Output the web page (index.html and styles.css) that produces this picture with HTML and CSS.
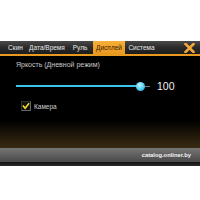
FILE: index.html
```html
<!DOCTYPE html>
<html>
<head>
<meta charset="utf-8">
<link rel="stylesheet" href="styles.css">
</head>
<body>
<div class="screen">
  <div class="tabbar">
    <div class="tab t1">Скин</div>
    <div class="tab t2">Дата/Время</div>
    <div class="tab t3">Руль</div>
    <div class="tab t4 active">Дисплей</div>
    <div class="tab t5">Система</div>
    <svg class="close" width="11" height="10" viewBox="0 0 11 10">
      <path d="M1.5 1 L9.5 9 M9.5 1 L1.5 9" stroke="#f4a838" stroke-width="2.6" stroke-linecap="square"/>
    </svg>
  </div>
  <div class="accent"></div>
  <div class="content">
    <div class="label">Яркость (Дневной режим)</div>
    <div class="slider-row">
      <div class="track">
        <div class="fill"></div>
        <div class="knob"></div>
        <div class="rest"></div>
      </div>
      <div class="value">100</div>
    </div>
    <div class="check-row">
      <div class="checkbox">
        <svg width="9" height="8" viewBox="0 0 9 8"><path d="M1 3.5 L3.5 6.5 L8 1" fill="none" stroke="#f0e020" stroke-width="1.8"/></svg>
      </div>
      <div class="check-label">Камера</div>
    </div>
  </div>
  <div class="footer"><span class="site">catalog.onliner.by</span></div>
  <div class="bottom"></div>
</div>
</body>
</html>
```
FILE: styles.css
```css
html, body {
  margin: 0;
  padding: 0;
  background: #ffffff;
  font-family: "Liberation Sans", Arial, sans-serif;
}
.screen {
  margin-top: 41px;
  width: 200px;
  display: flex;
  flex-direction: column;
  background: #000;
}
.tabbar {
  height: 13px;
  display: flex;
  align-items: stretch;
  padding-left: 4px;
  background: linear-gradient(#4a4a4a, #2a2a2a 50%, #1c1c1c);
}
.tab {
  color: #e8e8e8;
  font-size: 6.5px;
  display: flex;
  align-items: center;
  justify-content: center;
}
.t1 { width: 23px; }
.t2 { width: 40px; }
.t3 { width: 26px; }
.t4 { width: 32px; }
.t5 { width: 33px; }
.tab.active {
  background: linear-gradient(#f8b038, #e89820);
  color: #3a1a00;
}
.close {
  margin-left: auto;
  margin-right: 5px;
  align-self: center;
}
.accent {
  height: 2px;
  background: #e89a20;
}
.content {
  height: 87px;
  padding: 5px 0 0 16px;
  background: linear-gradient(#000 0, #000 70%, #3a2b12 100%);
}
.label {
  color: #c8c8c8;
  font-size: 7px;
  line-height: 8px;
}
.slider-row {
  margin-top: 10px;
  display: flex;
  align-items: center;
  height: 14px;
}
.track {
  display: flex;
  align-items: center;
  width: 134px;
}
.fill {
  width: 123px;
  height: 2px;
  background: #3cc4e8;
}
.knob {
  width: 9px;
  height: 9px;
  margin-left: -1px;
  border-radius: 50%;
  background: radial-gradient(circle at 40% 35%, #c8f4ff, #40c8f0 60%, #2090c0);
}
.rest {
  width: 5px;
  height: 1px;
  background: #777;
}
.value {
  margin-left: 7px;
  color: #f0f0f0;
  font-size: 10.5px;
}
.check-row {
  margin-top: 8px;
  display: flex;
  align-items: center;
  padding-left: 5px;
}
.checkbox {
  width: 10px;
  height: 10px;
  box-sizing: border-box;
  border: 1px solid #333;
  border-right-color: #666;
  border-bottom-color: #666;
  background: #111;
  display: flex;
  align-items: center;
  justify-content: center;
}
.check-label {
  margin-left: 3px;
  color: #d0d0d0;
  font-size: 6.5px;
}
.footer {
  height: 14px;
  display: flex;
  align-items: center;
  justify-content: flex-end;
  padding-right: 9px;
  background: linear-gradient(#767676, #5a5a5a 60%, #4a4a4a);
}
.site {
  color: #f4f4f4;
  font-size: 5.8px;
  font-weight: bold;
}
.bottom {
  height: 4px;
  background: linear-gradient(#111, #2a2a2a);
}
```
